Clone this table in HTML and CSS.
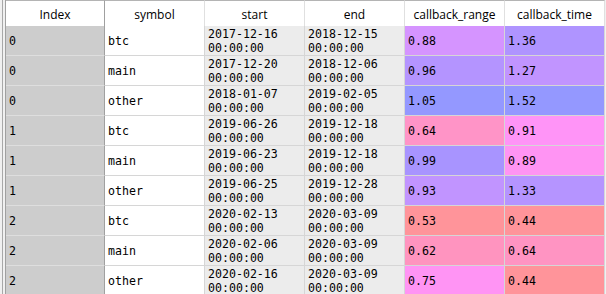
FILE: index.html
```html
<!DOCTYPE html>
<html>
<head>
<meta charset="utf-8">
<link rel="stylesheet" href="styles.css">
</head>
<body>
<div class="frame">
  <div class="grid">
    <div class="hd idx">Index</div>
    <div class="hd">symbol</div>
    <div class="hd">start</div>
    <div class="hd">end</div>
    <div class="hd">callback_range</div>
    <div class="hd">callback_time</div>

    <div class="c idx">0</div><div class="c str">btc</div>
    <div class="c dt"><span>2017-12-16<br>00:00:00</span></div><div class="c dt"><span>2018-12-15<br>00:00:00</span></div>
    <div class="c" style="background:#d594ff">0.88</div><div class="c" style="background:#af94ff">1.36</div>

    <div class="c idx">0</div><div class="c str">main</div>
    <div class="c dt"><span>2017-12-20<br>00:00:00</span></div><div class="c dt"><span>2018-12-06<br>00:00:00</span></div>
    <div class="c" style="background:#b494ff">0.96</div><div class="c" style="background:#c194ff">1.27</div>

    <div class="c idx">0</div><div class="c str">other</div>
    <div class="c dt"><span>2018-01-07<br>00:00:00</span></div><div class="c dt"><span>2019-02-05<br>00:00:00</span></div>
    <div class="c" style="background:#9498ff">1.05</div><div class="c" style="background:#9498ff">1.52</div>

    <div class="c idx">1</div><div class="c str">btc</div>
    <div class="c dt"><span>2019-06-26<br>00:00:00</span></div><div class="c dt"><span>2019-12-18<br>00:00:00</span></div>
    <div class="c" style="background:#ff94c7">0.64</div><div class="c" style="background:#ff94f7">0.91</div>

    <div class="c idx">1</div><div class="c str">main</div>
    <div class="c dt"><span>2019-06-23<br>00:00:00</span></div><div class="c dt"><span>2019-12-18<br>00:00:00</span></div>
    <div class="c" style="background:#a894ff">0.99</div><div class="c" style="background:#ff94f3">0.89</div>

    <div class="c idx">1</div><div class="c str">other</div>
    <div class="c dt"><span>2019-06-25<br>00:00:00</span></div><div class="c dt"><span>2019-12-28<br>00:00:00</span></div>
    <div class="c" style="background:#c194ff">0.93</div><div class="c" style="background:#b594ff">1.33</div>

    <div class="c idx">2</div><div class="c str">btc</div>
    <div class="c dt"><span>2020-02-13<br>00:00:00</span></div><div class="c dt"><span>2020-03-09<br>00:00:00</span></div>
    <div class="c" style="background:#ff949a">0.53</div><div class="c" style="background:#ff949a">0.44</div>

    <div class="c idx">2</div><div class="c str">main</div>
    <div class="c dt"><span>2020-02-06<br>00:00:00</span></div><div class="c dt"><span>2020-03-09<br>00:00:00</span></div>
    <div class="c" style="background:#ff94bf">0.62</div><div class="c" style="background:#ff94c2">0.64</div>

    <div class="c idx">2</div><div class="c str">other</div>
    <div class="c dt"><span>2020-02-16<br>00:00:00</span></div><div class="c dt"><span>2020-03-09<br>00:00:00</span></div>
    <div class="c" style="background:#ff94f4">0.75</div><div class="c" style="background:#ff949a">0.44</div>
  </div>
</div>
</body>
</html>
```

FILE: styles.css
```css
html, body {
  margin: 0;
  padding: 0;
  background: #f0f0f0;
  height: 100%;
  overflow: hidden;
}

.frame {
  margin-left: 2px;
  border-left: 1px solid #a8a8a8;
  padding-left: 2px;
  height: 100%;
}

.grid {
  display: grid;
  grid-template-columns: 99px repeat(5, 100px);
  grid-auto-rows: 30px;
  grid-template-rows: 26px;
  border-left: 1px solid #a0a0a0;
  width: 599px;
}

.hd {
  box-sizing: border-box;
  background: #ffffff;
  border-top: 1px solid #b4b4b4;
  border-right: 1px solid #e0e0e0;
  font-family: "Open Sans", "Liberation Sans", sans-serif;
  font-size: 12px;
  color: #000;
  display: flex;
  align-items: center;
  justify-content: center;
  padding-top: 2px;
}

.hd.idx {
  border-right: 1px solid #a0a0a0;
}

.c {
  box-sizing: border-box;
  border-right: 1px solid #d6d6d6;
  border-bottom: 1px solid #d6d6d6;
  font-family: "DejaVu Sans Mono", "Liberation Mono", monospace;
  font-size: 11.6px;
  line-height: 14px;
  color: #000;
  display: flex;
  align-items: center;
  padding-left: 3px;
  background: #ffffff;
}

.c.idx {
  background: #cdcdcd;
  border-right: 1px solid #a0a0a0;
  border-bottom: 1px solid #dedede;
}

.c.str {
  background: #ffffff;
}

.c.dt {
  background: #ececec;
}
```
